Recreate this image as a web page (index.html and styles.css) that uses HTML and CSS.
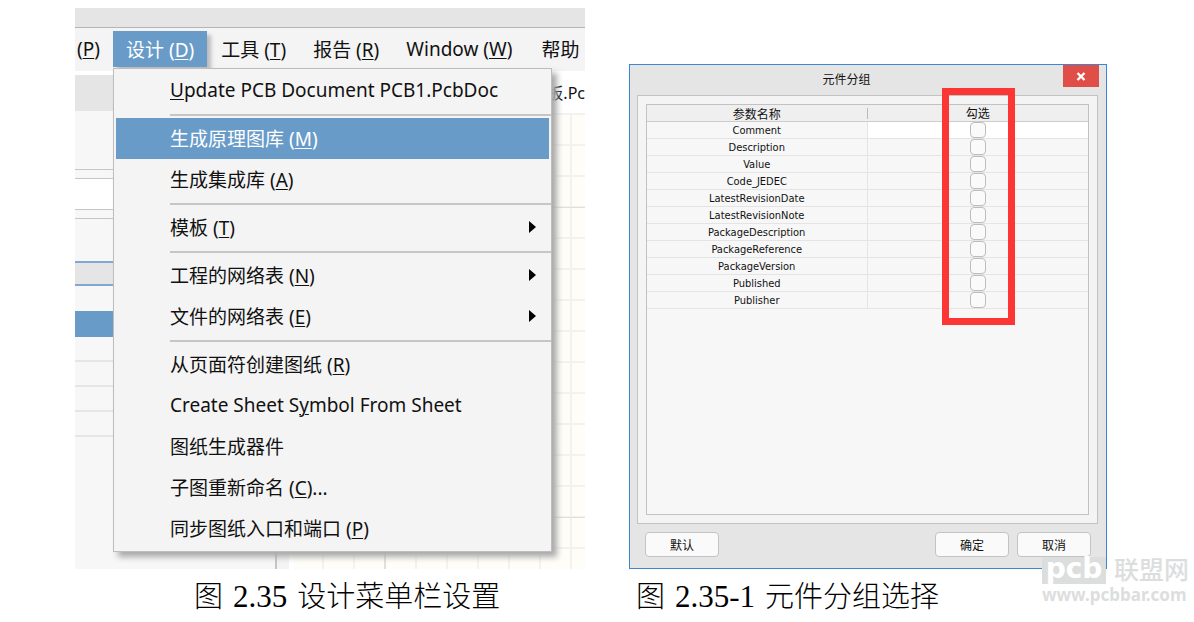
FILE: index.html
```html
<!DOCTYPE html>
<html lang="zh-CN">
<head>
<meta charset="utf-8">
<title>图 2.35 设计菜单栏设置</title>
<link rel="stylesheet" href="styles.css">
</head>
<body>
<main class="page">
  <figure class="figure">
    <div class="scene">
      <div class="backdrop">
        <div class="titlebar"></div>
        <nav class="menubar">
          <button class="menubar-item menubar-clipped">(<u>P</u>)</button>
          <button class="menubar-item menubar-open">设计 (<u>D</u>)</button>
          <button class="menubar-item">工具 (<u>T</u>)</button>
          <button class="menubar-item">报告 (<u>R</u>)</button>
          <button class="menubar-item">Window (<u>W</u>)</button>
          <button class="menubar-item menubar-last">帮助</button>
        </nav>
        <div class="workspace">
          <div class="side">
            <div class="side-head"></div>
            <div class="side-tools"></div>
            <div class="side-gap"></div>
            <div class="side-input"></div>
            <div class="side-gap"></div>
            <div class="side-space"></div>
            <div class="side-group"></div>
            <div class="side-blank"></div>
            <div class="side-selected"></div>
            <div class="side-rows"></div>
          </div>
          <div class="splitter"></div>
          <div class="editor">
            <div class="tab">板.Pc</div>
            <div class="sheet"></div>
          </div>
        </div>
      </div>
      <ul class="menu">
        <li><button class="menu-item"><span><u>U</u>pdate PCB Document PCB1.PcbDoc</span></button></li>
        <li class="separator"></li>
        <li><button class="menu-item menu-active"><span>生成原理图库 (<u>M</u>)</span></button></li>
        <li><button class="menu-item"><span>生成集成库 (<u>A</u>)</span></button></li>
        <li class="separator"></li>
        <li><button class="menu-item menu-sub"><span>模板 (<u>T</u>)</span></button></li>
        <li class="separator"></li>
        <li><button class="menu-item menu-sub"><span>工程的网络表 (<u>N</u>)</span></button></li>
        <li><button class="menu-item menu-sub"><span>文件的网络表 (<u>E</u>)</span></button></li>
        <li class="separator"></li>
        <li><button class="menu-item"><span>从页面符创建图纸 (<u>R</u>)</span></button></li>
        <li><button class="menu-item"><span>Create Sheet S<u>y</u>mbol From Sheet</span></button></li>
        <li><button class="menu-item"><span>图纸生成器件</span></button></li>
        <li><button class="menu-item"><span>子图重新命名 (<u>C</u>)...</span></button></li>
        <li><button class="menu-item"><span>同步图纸入口和端口 (<u>P</u>)</span></button></li>
      </ul>
    </div>
    <figcaption class="caption caption-menu"><span>图</span><span class="number">2.35</span><span>设计菜单栏设置</span></figcaption>
  </figure>

  <figure class="figure figure-dialog">
    <section class="dialog" aria-labelledby="dialog-title">
      <header class="dialog-head">
        <h2 class="dialog-title" id="dialog-title">元件分组</h2>
        <button class="close" aria-label="关闭">
          <svg width="10" height="9" viewBox="0 0 10 9"><path d="M1.5 1 8.5 8M8.5 1 1.5 8" stroke="#fff" stroke-width="2.4" fill="none"/></svg>
        </button>
      </header>
      <div class="panel">
        <div class="table-frame">
          <table class="params">
            <thead>
              <tr><th scope="col"><div class="name-head">参数名称</div></th><th scope="col">勾选</th></tr>
            </thead>
            <tbody>
              <tr class="current"><td><label for="p1">Comment</label></td><td><input type="checkbox" id="p1"></td></tr>
              <tr><td><label for="p2">Description</label></td><td><input type="checkbox" id="p2"></td></tr>
              <tr><td><label for="p3">Value</label></td><td><input type="checkbox" id="p3"></td></tr>
              <tr><td><label for="p4">Code_JEDEC</label></td><td><input type="checkbox" id="p4"></td></tr>
              <tr><td><label for="p5">LatestRevisionDate</label></td><td><input type="checkbox" id="p5"></td></tr>
              <tr><td><label for="p6">LatestRevisionNote</label></td><td><input type="checkbox" id="p6"></td></tr>
              <tr><td><label for="p7">PackageDescription</label></td><td><input type="checkbox" id="p7"></td></tr>
              <tr><td><label for="p8">PackageReference</label></td><td><input type="checkbox" id="p8"></td></tr>
              <tr><td><label for="p9">PackageVersion</label></td><td><input type="checkbox" id="p9"></td></tr>
              <tr><td><label for="p10">Published</label></td><td><input type="checkbox" id="p10"></td></tr>
              <tr><td><label for="p11">Publisher</label></td><td><input type="checkbox" id="p11"></td></tr>
            </tbody>
          </table>
          <div class="highlight"></div>
        </div>
      </div>
      <footer class="dialog-foot">
        <button class="btn btn-default">默认</button>
        <button class="btn">确定</button>
        <button class="btn">取消</button>
      </footer>
    </section>
    <figcaption class="caption caption-dialog"><span>图</span><span class="number">2.35-1</span><span>元件分组选择</span></figcaption>
  </figure>
</main>
<div class="watermark">
  <div class="watermark-top"><span class="watermark-logo">pcb</span><span class="watermark-name">联盟网</span></div>
  <div class="watermark-url">www.pcbbar.com</div>
</div>
</body>
</html>
```
FILE: styles.css
```css
* { box-sizing: border-box; }

body {
  margin: 0;
  background: #fff;
  color: #111;
  font-family: "Noto Sans", "Noto Sans CJK SC", sans-serif;
  position: relative;
}

button { font: inherit; color: inherit; border: 0; background: none; padding: 0; }
u { text-underline-offset: 2px; text-decoration-thickness: 1px; }

.page {
  display: grid;
  grid-template-columns: 510fr 478fr;
  gap: 44px;
  padding: 8px 87px 0 75px;
}

.figure { margin: 0; min-width: 0; display: flex; flex-direction: column; }
.figure-dialog { padding-top: 56px; }

/* Menu illustration */
.scene { display: grid; overflow: hidden; font-size: 19px; }
.backdrop, .menu { grid-area: 1 / 1; min-width: 0; }
.backdrop { display: flex; flex-direction: column; background: #fff; }

.titlebar { height: 20px; background: #e5e5e5; border-bottom: 1px solid #b5b5b5; }
.menubar {
  display: flex;
  gap: 1px;
  height: 43px;
  padding: 3px 0 4px;
  background: #f4f4f4;
  white-space: nowrap;
}
.menubar-item { padding: 0 13px; flex: none; }
.menubar-clipped { width: 37px; padding: 0 0 0 2px; text-align: left; }
.menubar-last { padding: 0 0 0 15px; }
.menubar-open { background: #699bc9; color: #fff; box-shadow: 4px 4px 4px #bbb; }

.workspace { flex: 1; display: flex; }
.side {
  width: 202px;
  display: flex;
  flex-direction: column;
  padding-top: 4px;
  background: linear-gradient(#fff 4px, #f7f7f7 4px);
  border-right: 2px solid #c4c4c4;
}
.side-head { height: 36px; background: #e5e5e5; }
.side-tools { height: 58px; }
.side-gap { height: 10px; border: solid #c6c6c6; border-width: 1px 0; }
.side-input { height: 30px; background: #fff; }
.side-space { height: 42px; }
.side-group { height: 25px; border: solid #7fa9d3; border-width: 2px 0; background: #e5e5e5; }
.side-blank { height: 25px; }
.side-selected { height: 26px; background: #699bc9; }
.side-rows {
  height: 101px;
  background: repeating-linear-gradient(transparent 0 23px, #e6e6e6 23px 25px);
}
.splitter { width: 12px; background: #f4f4f4; }
.editor { flex: 1; min-width: 0; display: flex; flex-direction: column; padding-left: 5px; }
.tab { height: 42px; line-height: 44px; font-size: 16px; text-align: right; white-space: nowrap; }
.sheet {
  flex: 1;
  background-color: #fffdf8;
  background-image:
    linear-gradient(#dfe0dc 1px, transparent 1px),
    linear-gradient(90deg, #dfe0dc 2px, transparent 2px),
    linear-gradient(#f2f2ef 2px, transparent 2px),
    linear-gradient(90deg, #f2f2ef 2px, transparent 2px);
  background-size: 100% 310px, 310px 100%, 100% 31px, 31px 100%;
  background-position: 0 94px, 90px 0, 0 31px, 28px 0;
}

.menu {
  list-style: none;
  margin: 60px 33px 17px 38px;
  padding: 1px 2px 2px;
  background: #f4f4f4;
  border: 1px solid #bdbdbd;
  box-shadow: 5px 5px 6px #aaa;
}
.menu-item {
  display: flex;
  align-items: center;
  justify-content: space-between;
  width: 100%;
  height: 41px;
  padding: 0 13px 1px 54px;
  text-align: left;
  white-space: nowrap;
}
.menu-active { background: #699bc9; color: #fff; }
.menu-sub::after {
  content: "";
  border: solid transparent;
  border-width: 6px 0 6px 7px;
  border-left-color: #000;
}
.separator { height: 7px; padding-top: 3px; margin: 0 -2px 0 54px; }
.separator::before { content: ""; display: block; height: 2px; background: #c6c6c6; }

.caption {
  display: flex;
  align-items: baseline;
  gap: 10px;
  height: 53px;
  line-height: 50px;
  font-family: "Noto Sans CJK SC", sans-serif;
  font-weight: 300;
  font-size: 29px;
  color: #000;
  white-space: nowrap;
}
.caption-menu { padding-left: 119px; }
.caption-dialog { padding-left: 7px; }
.number { font-family: "Liberation Serif", serif; font-size: 31px; }

/* Dialog illustration */
.dialog {
  flex: 1;
  display: flex;
  flex-direction: column;
  border: 1px solid #3a87d3;
  background: #e5e5e5;
  font-size: 11px;
}
.dialog-head { display: flex; height: 30px; padding-right: 7px; }
.dialog-title { flex: 1; margin: 0; font-size: 12px; font-weight: 400; line-height: 30px; text-align: center; }
.close { width: 36px; height: 22px; background: #df4f47; display: grid; place-items: center; }
.panel {
  flex: 1;
  display: flex;
  margin: 0 8px 0 7px;
  padding: 8px;
  background: #f4f4f4;
  border: 1px solid #c2c2c2;
}
.table-frame { flex: 1; position: relative; border: 1px solid #c2c2c2; background: #f7f7f7; }
.params { width: 100%; table-layout: fixed; border-collapse: separate; border-spacing: 0; font-family: "DejaVu Sans Condensed", "Noto Sans CJK SC", sans-serif; }
.params th { height: 17px; padding: 0; font-family: "Noto Sans CJK SC", sans-serif; font-size: 12px; font-weight: 400; line-height: 16px; background: #efefef; border-bottom: 1px solid #ccc; }
.name-head { height: 11px; line-height: 11px; border-right: 1px solid #bbb; }
.params td { height: 17px; padding: 0; line-height: 15px; text-align: center; border-bottom: 1px solid #e4e4e4; }
.params td:first-child { border-right: 1px solid #e4e4e4; }
.current td:last-child { background: #fff; }
.params input {
  appearance: none;
  display: block;
  width: 16px;
  height: 16px;
  margin: 0 auto;
  border: 1px solid #bdbdbd;
  border-radius: 4px;
  background: #fafafa;
}
.highlight {
  position: absolute;
  top: -17px;
  left: calc(75% - 36px);
  width: 73px;
  height: 237px;
  border: 7px solid #fc3535;
  pointer-events: none;
}
.dialog-foot { display: flex; gap: 8px; padding: 8px 15px 11px; }
.btn { width: 74px; height: 25px; border: 1px solid #c3c3c3; border-radius: 4px; background: #fafafa; font-size: 12px; }
.btn-default { margin-right: auto; }

/* Site mark over the corner */
.watermark { position: absolute; right: 5px; top: 557px; color: #dcdede; font-weight: 700; }
.watermark-top { display: flex; align-items: flex-start; justify-content: space-between; gap: 8px; height: 28px; }
.watermark-logo { width: 64px; height: 27px; background: #dcdede; color: #fff; font-family: "DejaVu Sans", sans-serif; font-size: 28px; line-height: 24px; text-align: center; }
.watermark-name { font-size: 25px; font-weight: 500; line-height: 25px; }
.watermark-url { font-size: 17px; line-height: 20px; }
```
